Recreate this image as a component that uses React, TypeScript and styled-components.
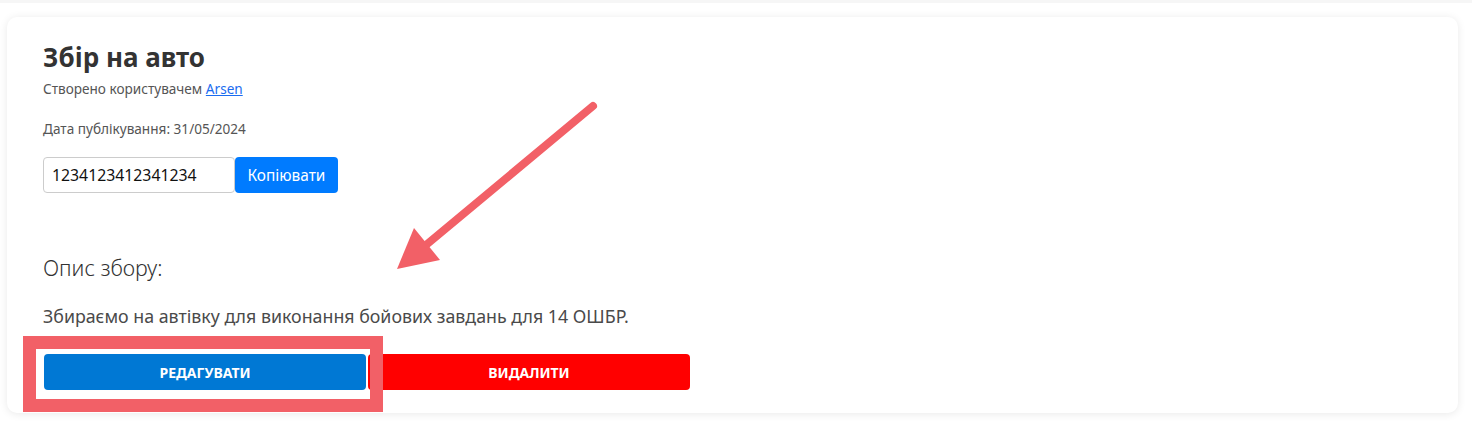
import React from "react";
import styled, { createGlobalStyle } from "styled-components";

const Global = createGlobalStyle`
  html, body { margin: 0; padding: 0; background: #ffffff; }
  body { font-family: "Noto Sans", "Open Sans", sans-serif; }
  * { box-sizing: border-box; }
`;

const Page = styled.div`
  position: relative;
  width: 1472px;
  height: 423px;
  overflow: hidden;
  background: #ffffff;
`;

const TopStrip = styled.div`
  height: 3px;
  background: #f6f6f6;
`;

const Content = styled.div`
  padding: 14px 14px 0 7px;
`;

const Card = styled.div`
  width: 1451px;
  height: 396px;
  background: #ffffff;
  border-radius: 10px;
  box-shadow: 0 1px 8px rgba(0, 0, 0, 0.09);
  padding: 24px 36px 0 36px;
  display: flex;
  flex-direction: column;
`;

const Title = styled.h2`
  margin: 0;
  font-size: 26px;
  line-height: 32px;
  font-weight: 700;
  color: #333333;
`;

const Meta = styled.p<{ $gap?: number }>`
  margin: ${(p) => p.$gap ?? 0}px 0 0 0;
  font-size: 13.6px;
  line-height: 18px;
  color: #555555;
`;

const Link = styled.a`
  color: #1a6cf0;
  text-decoration: underline;
`;

const CopyRow = styled.div`
  margin-top: 19px;
  display: flex;
  height: 36px;
`;

const Input = styled.input`
  width: 192px;
  height: 36px;
  border: 1px solid #cccccc;
  border-radius: 4px;
  padding: 0 8px;
  font-family: inherit;
  font-size: 15.8px;
  color: #111111;
  outline: none;
`;

const CopyButton = styled.button`
  height: 36px;
  width: 103px;
  border: none;
  border-radius: 4px;
  background: #007bff;
  color: #ffffff;
  font-family: inherit;
  font-size: 15.4px;
  padding: 0;
`;

const SectionTitle = styled.h3`
  margin: 61px 0 0 0;
  font-size: 21.4px;
  line-height: 28px;
  font-weight: 300;
  color: #333333;
`;

const Description = styled.p`
  margin: 22px 0 0 0;
  font-size: 17.8px;
  line-height: 24px;
  color: #4a4a4a;
`;

const Actions = styled.div`
  margin-top: 26px;
  display: flex;
  gap: 2px;
  padding-left: 1px;
`;

const ActionButton = styled.button<{ $tone: "edit" | "delete" }>`
  width: 322px;
  height: 36px;
  border: none;
  border-radius: 4px;
  background: ${(p) => (p.$tone === "edit" ? "#0078d4" : "#ff0000")};
  color: #ffffff;
  font-family: inherit;
  font-size: 14px;
  font-weight: 700;
  text-transform: uppercase;
`;

const Highlight = styled.div`
  position: absolute;
  left: 23px;
  top: 336px;
  width: 360px;
  height: 76px;
  border: 13px solid #f26067;
  pointer-events: none;
`;

const Arrow = styled.svg`
  position: absolute;
  left: 0;
  top: 0;
  pointer-events: none;
`;

export default function App() {
  return (
    <>
      <Global />
      <Page>
        <TopStrip />
        <Content>
          <Card>
            <Title>Збір на авто</Title>
            <Meta $gap={7}>
              Створено користувачем <Link href="#">Arsen</Link>
            </Meta>
            <Meta $gap={22}>Дата публікування: 31/05/2024</Meta>
            <CopyRow>
              <Input defaultValue="1234123412341234" readOnly />
              <CopyButton>Копіювати</CopyButton>
            </CopyRow>
            <SectionTitle>Опис збору:</SectionTitle>
            <Description>
              Збираємо на автівку для виконання бойових завдань для 14 ОШБР.
            </Description>
            <Actions>
              <ActionButton $tone="edit">Редагувати</ActionButton>
              <ActionButton $tone="delete">Видалити</ActionButton>
            </Actions>
          </Card>
        </Content>
        <Highlight />
        <Arrow width="1472" height="423" viewBox="0 0 1472 423">
          <line x1="593" y1="106" x2="420" y2="250" stroke="#f26067" strokeWidth="8" strokeLinecap="round" />
          <polygon points="397,269 414,228 440,260" fill="#f26067" />
        </Arrow>
      </Page>
    </>
  );
}
